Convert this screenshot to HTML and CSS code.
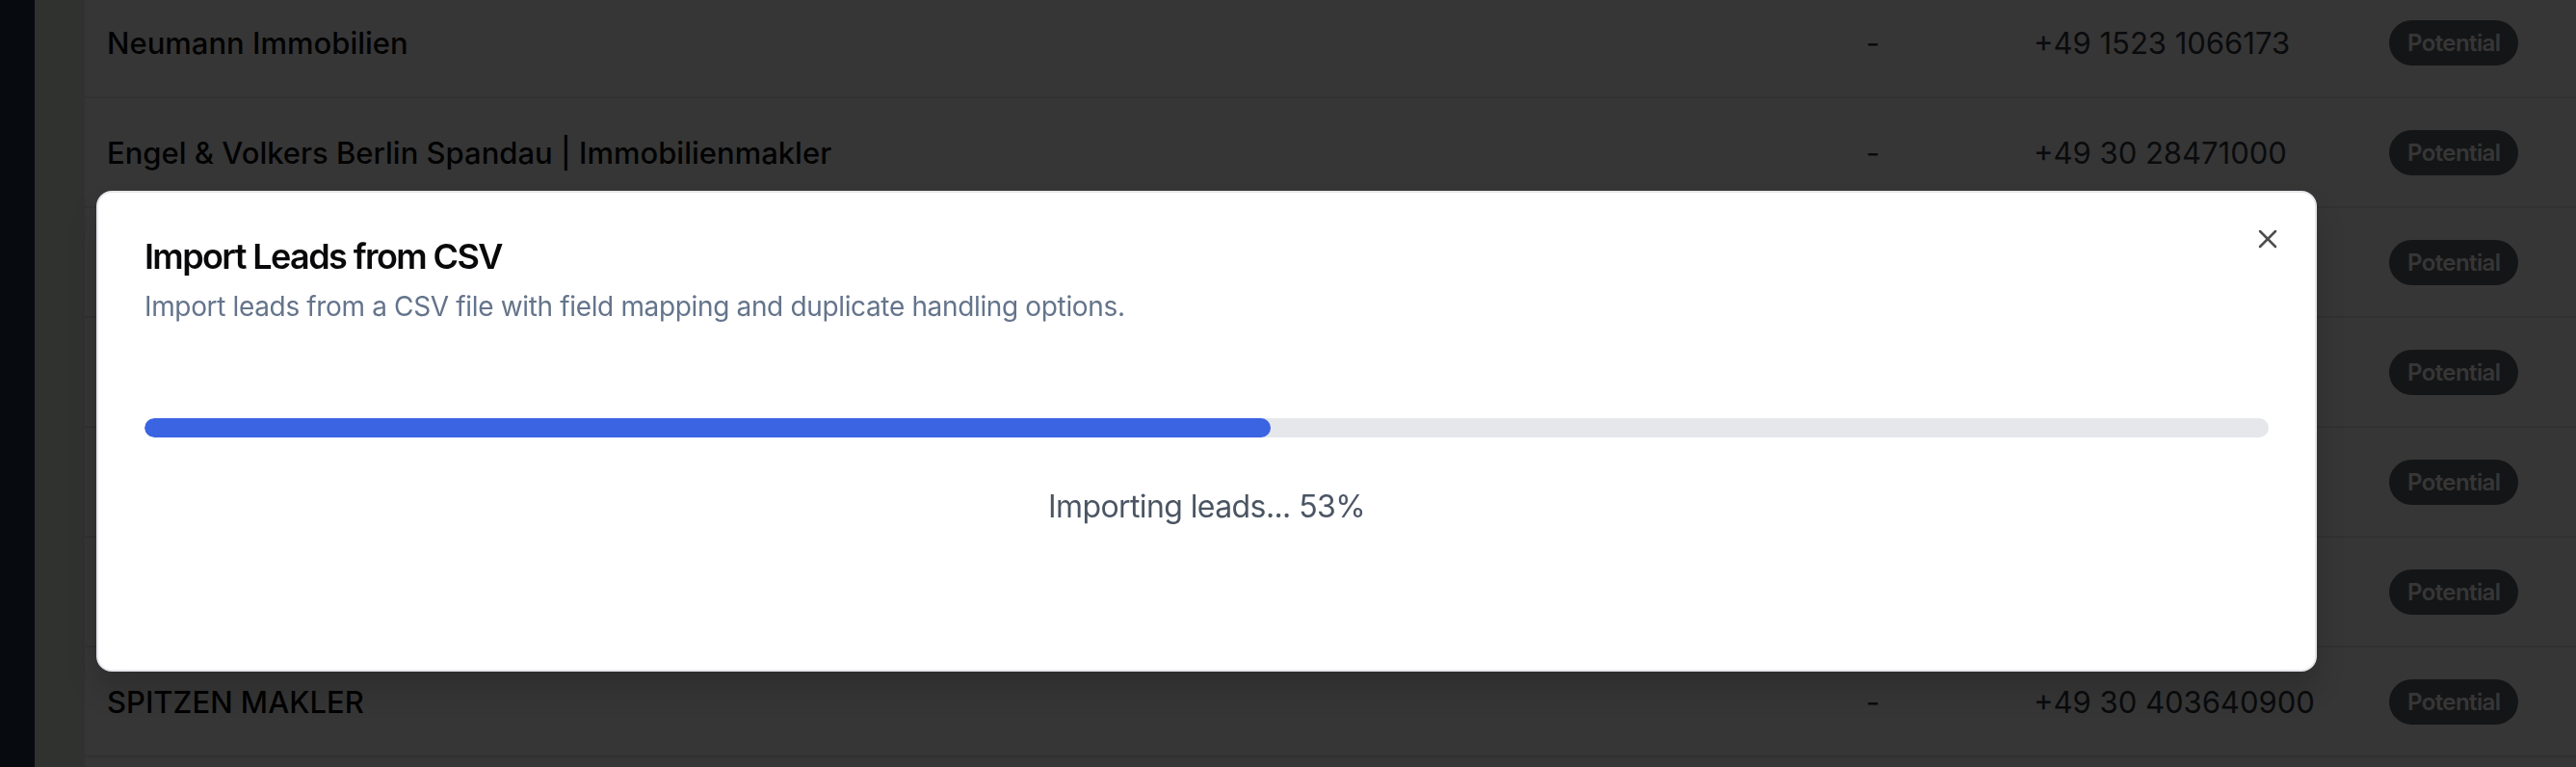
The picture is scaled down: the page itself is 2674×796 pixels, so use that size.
FILE: index.html
```html
<!DOCTYPE html>
<html lang="de">
<head>
<meta charset="utf-8">
<title>Leads – Import</title>
<link rel="stylesheet" href="styles.css">
</head>
<body>
  <aside class="sidebar"></aside>
  <main class="main">
    <section class="card">
      <div class="rows">
        <div class="row"><span class="name">Neumann Immobilien</span><span class="muted">-</span><span class="muted">+49 1523 1066173</span><span><span class="badge">Potential</span></span></div>
        <div class="row"><span class="name">Engel &amp; Volkers Berlin Spandau | Immobilienmakler</span><span class="muted">-</span><span class="muted">+49 30 28471000</span><span><span class="badge">Potential</span></span></div>
        <div class="row"><span class="name">Immobilien Schulz GmbH</span><span class="muted">-</span><span class="muted">+49 30 8812345</span><span><span class="badge">Potential</span></span></div>
        <div class="row"><span class="name">Berlin Property Partners</span><span class="muted">-</span><span class="muted">+49 30 4401220</span><span><span class="badge">Potential</span></span></div>
        <div class="row"><span class="name">Kiez Immobilien Charlottenburg</span><span class="muted">-</span><span class="muted">+49 30 3137788</span><span><span class="badge">Potential</span></span></div>
        <div class="row"><span class="name">Haus &amp; Grund Makler Berlin</span><span class="muted">-</span><span class="muted">+49 30 2159900</span><span><span class="badge">Potential</span></span></div>
        <div class="row"><span class="name">SPITZEN MAKLER</span><span class="muted">-</span><span class="muted">+49 30 403640900</span><span><span class="badge">Potential</span></span></div>
        <div class="row"><span class="name">Wohnraum Berlin Immobilien</span><span class="muted">-</span><span class="muted">+49 30 5551234</span><span><span class="badge">Potential</span></span></div>
      </div>
    </section>
  </main>

  <div class="overlay"></div>

  <div class="dialog" role="dialog" aria-labelledby="dlg-title">
    <header class="dialog-header">
      <h2 id="dlg-title" class="dialog-title">Import Leads from CSV</h2>
      <p class="dialog-desc">Import leads from a CSV file with field mapping and duplicate handling options.</p>
    </header>
    <div class="dialog-body">
      <div class="progress"><div class="progress-fill" style="width:53%"></div></div>
      <p class="progress-label">Importing leads... 53%</p>
    </div>
    <button class="close" aria-label="Close">
      <svg viewBox="0 0 24 24" width="32" height="32" fill="none" stroke="currentColor" stroke-width="1.9" stroke-linecap="round" stroke-linejoin="round"><path d="M18 6 6 18"/><path d="m6 6 12 12"/></svg>
    </button>
  </div>
</body>
</html>
```
FILE: styles.css
```css
* { box-sizing: border-box; }

html, body {
  margin: 0;
  height: 796px;
  overflow: hidden;
}

body {
  display: flex;
  font-family: Inter, "Noto Sans", "Liberation Sans", sans-serif;
  color: #0a0a0a;
  background: #e0e9e4;
}

.sidebar {
  width: 36px;
  flex: none;
  background: #222f43;
}

.main {
  flex: 1;
  padding-left: 50px;
  background: #e0e9e4;
}

.card {
  height: 100%;
  background: #ffffff;
  border-left: 2px solid #e5e5e5;
  overflow: hidden;
}

.rows {
  margin-top: -12px;
}

.row {
  display: grid;
  grid-template-columns: 1826px 174px 369px 1fr;
  align-items: center;
  height: 114px;
  padding-left: 23px;
  border-bottom: 2px solid #e5e5e5;
  font-size: 31px;
}

.name {
  font-weight: 500;
  color: #0a0a0a;
}

.muted {
  color: #303640;
}

.badge {
  display: inline-flex;
  align-items: center;
  height: 47px;
  padding: 0 19px;
  border-radius: 24px;
  background: #5f6269;
  color: #ffffff;
  font-size: 24px;
  font-weight: 600;
  letter-spacing: -0.6px;
}

.overlay {
  position: fixed;
  inset: 0;
  background: rgba(0, 0, 0, 0.79);
}

.dialog {
  position: absolute;
  left: 100px;
  top: 198px;
  width: 2305px;
  padding: 48px;
  background: #ffffff;
  border: 2px solid #e5e7eb;
  border-radius: 16px;
  box-shadow: 0 20px 30px rgba(0, 0, 0, 0.15);
}

.dialog-header {
  display: flex;
  flex-direction: column;
  gap: 14px;
}

.dialog-title {
  margin: 0;
  font-size: 36px;
  line-height: 36px;
  font-weight: 600;
  letter-spacing: -1.6px;
  color: #09090b;
}

.dialog-desc {
  margin: 0;
  font-size: 28px;
  line-height: 40px;
  letter-spacing: -0.35px;
  color: #64748b;
}

.dialog-body {
  padding: 96px 0 97px;
}

.progress {
  height: 20px;
  border-radius: 10px;
  background: #e5e7eb;
  overflow: hidden;
}

.progress-fill {
  height: 100%;
  border-radius: 10px;
  background: #3b64e3;
}

.progress-label {
  margin: 48px 0 0;
  font-size: 32px;
  line-height: 48px;
  letter-spacing: -0.6px;
  text-align: center;
  color: #4b5563;
}

.close {
  position: absolute;
  top: 32px;
  right: 33px;
  width: 32px;
  height: 32px;
  padding: 0;
  border: 0;
  background: transparent;
  color: #09090b;
  opacity: 0.72;
  display: flex;
}
```
